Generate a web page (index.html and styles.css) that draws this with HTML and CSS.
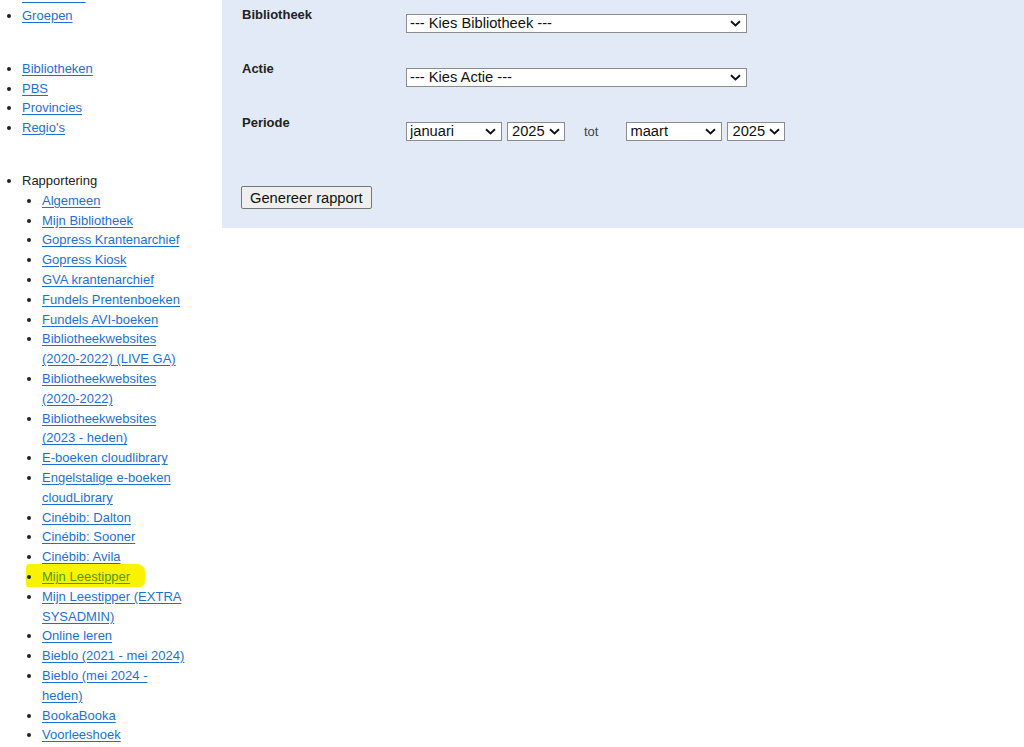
FILE: index.html
```html
<!DOCTYPE html>
<html lang="nl">
<head>
<meta charset="utf-8">
<title>Rapportering</title>
<link rel="stylesheet" href="styles.css">
</head>
<body>
<div class="page">
  <nav class="sidebar">
    <ul class="menu menu-first">
      <li><a href="#">Gebruikers</a></li>
      <li><a href="#">Groepen</a></li>
    </ul>
    <ul class="menu">
      <li><a href="#">Bibliotheken</a></li>
      <li><a href="#">PBS</a></li>
      <li><a href="#">Provincies</a></li>
      <li><a href="#">Regio's</a></li>
    </ul>
    <ul class="menu">
      <li class="plain">Rapportering
        <ul class="submenu">
          <li><a href="#">Algemeen</a></li>
          <li><a href="#">Mijn Bibliotheek</a></li>
          <li><a href="#">Gopress Krantenarchief</a></li>
          <li><a href="#">Gopress Kiosk</a></li>
          <li><a href="#">GVA krantenarchief</a></li>
          <li><a href="#">Fundels Prentenboeken</a></li>
          <li><a href="#">Fundels AVI-boeken</a></li>
          <li><a href="#">Bibliotheekwebsites (2020-2022) (LIVE GA)</a></li>
          <li><a href="#">Bibliotheekwebsites (2020-2022)</a></li>
          <li><a href="#">Bibliotheekwebsites (2023 - heden)</a></li>
          <li><a href="#">E-boeken cloudlibrary</a></li>
          <li><a href="#">Engelstalige e-boeken cloudLibrary</a></li>
          <li><a href="#">Cinébib: Dalton</a></li>
          <li><a href="#">Cinébib: Sooner</a></li>
          <li><a href="#">Cinébib: Avila</a></li>
          <li class="marked"><span class="marker"></span><a href="#">Mijn Leestipper</a></li>
          <li><a href="#">Mijn Leestipper (EXTRA SYSADMIN)</a></li>
          <li><a href="#">Online leren</a></li>
          <li><a href="#">Bieblo (2021 - mei 2024)</a></li>
          <li><a href="#">Bieblo (mei 2024 - heden)</a></li>
          <li><a href="#">BookaBooka</a></li>
          <li><a href="#">Voorleeshoek</a></li>
        </ul>
      </li>
    </ul>
  </nav>
  <main class="panel">
    <form class="report-form">
      <div class="row">
        <label class="label">Bibliotheek</label>
        <div class="field">
          <select class="select select-wide"><option>--- Kies Bibliotheek ---</option></select>
        </div>
      </div>
      <div class="row">
        <label class="label">Actie</label>
        <div class="field">
          <select class="select select-wide"><option>--- Kies Actie ---</option></select>
        </div>
      </div>
      <div class="row">
        <label class="label">Periode</label>
        <div class="field period">
          <select class="select select-month"><option>januari</option></select>
          <select class="select select-year"><option>2025</option></select>
          <span class="tot">tot</span>
          <select class="select select-month"><option>maart</option></select>
          <select class="select select-year"><option>2025</option></select>
        </div>
      </div>
      <div class="actions">
        <button type="button" class="button">Genereer rapport</button>
      </div>
    </form>
  </main>
</div>
</body>
</html>
```

FILE: styles.css
```css
html, body {
  margin: 0;
  padding: 0;
  background: #ffffff;
}

body {
  font-family: "Liberation Sans", Arial, sans-serif;
  font-size: 13px;
  color: #222222;
  overflow: hidden;
}

.page {
  display: flex;
  align-items: flex-start;
}

.sidebar {
  width: 222px;
  flex: 0 0 222px;
  box-sizing: border-box;
  padding-right: 31px;
  line-height: 19.8px;
}

.menu {
  margin: 0 0 33px 0;
  padding-left: 22px;
  list-style: disc;
}

.menu-first {
  margin-top: -13.8px;
}

.submenu {
  margin: 0;
  padding-left: 20px;
  list-style: disc;
}

.sidebar li {
  color: #222222;
}

.sidebar a {
  color: #1f6fd1;
  text-decoration: underline;
  text-underline-offset: 2px;
}

.plain {
  color: #333333;
}

.marked {
  position: relative;
  z-index: 0;
}

.marked a {
  color: #4f9a06;
}

.marker {
  position: absolute;
  left: -16px;
  top: -3px;
  width: 119px;
  height: 23px;
  background: #fbf200;
  border-radius: 3px 8px 5px 2px / 4px 7px 5px 3px;
  z-index: -1;
}

.panel {
  flex: 1 1 auto;
  background: #e3eaf7;
  padding: 7px 20px 19px 20px;
}

.row {
  display: flex;
  height: 54px;
}

.label {
  width: 164px;
  flex: 0 0 164px;
  font-weight: bold;
  line-height: 16px;
  color: #222222;
}

.field {
  padding-top: 7px;
  display: flex;
  align-items: flex-start;
}

.select {
  -webkit-appearance: none;
  appearance: none;
  box-sizing: border-box;
  height: 19px;
  margin: 0;
  padding: 0 16px 0 3px;
  border: 1px solid #8c8c8c;
  border-radius: 0;
  background-color: #ffffff;
  background-image: url("data:image/svg+xml,%3Csvg xmlns='http://www.w3.org/2000/svg' width='11' height='7' viewBox='0 0 11 7'%3E%3Cpath d='M1 1.2l4.5 4.3 4.5-4.3' fill='none' stroke='%23111' stroke-width='1.9'/%3E%3C/svg%3E");
  background-repeat: no-repeat;
  background-position: right 5px center;
  font-family: "Liberation Sans", Arial, sans-serif;
  font-size: 14.7px;
  line-height: 17px;
  color: #111111;
}

.select-wide {
  width: 341px;
}

.select-month {
  width: 96px;
}

.select-year {
  width: 58px;
  margin-left: 5px;
  padding-left: 4px;
  padding-right: 14px;
  background-position: right 4px center;
}

.tot {
  margin: 0 28px 0 19px;
  line-height: 19px;
  color: #444444;
}

.actions {
  padding-top: 17px;
}

.button {
  box-sizing: border-box;
  height: 23px;
  margin-left: -1px;
  padding: 0 8px;
  border: 1px solid #767676;
  border-radius: 2px;
  background: #efefef;
  font-family: "Liberation Sans", Arial, sans-serif;
  font-size: 14.7px;
  color: #111111;
}
```
